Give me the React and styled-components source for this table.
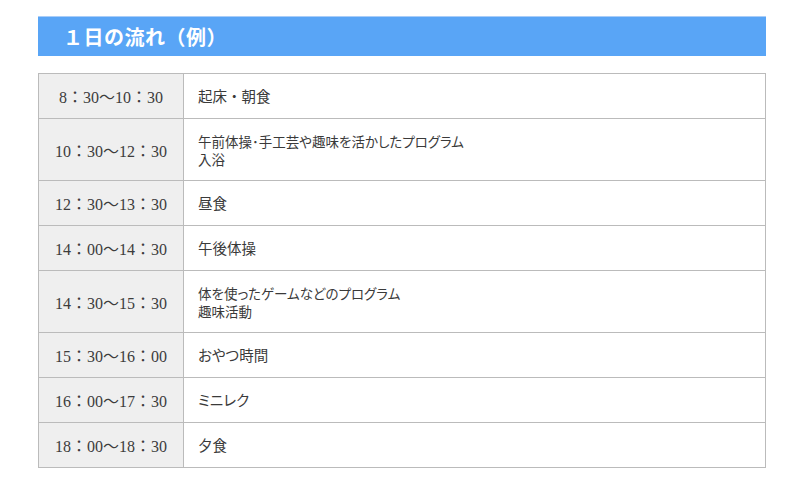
import styled, { createGlobalStyle } from 'styled-components'

const GlobalStyle = createGlobalStyle`
  body {
    margin: 0;
    background: #fff;
    font-family: "Noto Sans CJK JP", "Noto Sans", sans-serif;
  }
`

const Page = styled.div`
  padding: 16px 34px 0 38px;
`

const Heading = styled.h2`
  margin: 0;
  height: 40px;
  display: flex;
  align-items: center;
  padding-left: 25px;
  background: #59a5f6;
  border-top: 1px solid #a9cdf8;
  box-sizing: border-box;
  color: #fff;
  font-size: 20px;
  font-weight: 700;
  letter-spacing: 0.5px;
`

const Table = styled.table`
  margin-top: 17px;
  width: 100%;
  border-collapse: collapse;
  border: 1px solid #bbb;
`

const Row = styled.tr`
  height: ${p => (p.$tall ? 62 : 45)}px;
`

const Time = styled.th`
  width: 144px;
  padding: 0;
  background: #efefef;
  border: 1px solid #bbb;
  color: #3c3c3c;
  font-family: "Liberation Serif", "Noto Sans CJK JP", serif;
  font-size: 16px;
  font-weight: 400;
  text-align: center;
`

const Desc = styled.td`
  padding: 0 14px;
  border: 1px solid #bbb;
  color: #3a3a3a;
  font-size: ${p => (p.$small ? 13.5 : 14.5)}px;
  line-height: 18px;
  font-feature-settings: "palt";
`

const Dot = styled.span`
  font-feature-settings: normal;
`

const schedule = [
  { time: '8：30〜10：30', lines: [<>起床<Dot>・</Dot>朝食</>] },
  { time: '10：30〜12：30', lines: ['午前体操･手工芸や趣味を活かしたプログラム', '入浴'] },
  { time: '12：30〜13：30', lines: ['昼食'] },
  { time: '14：00〜14：30', lines: ['午後体操'] },
  { time: '14：30〜15：30', lines: ['体を使ったゲームなどのプログラム', '趣味活動'] },
  { time: '15：30〜16：00', lines: ['おやつ時間'] },
  { time: '16：00〜17：30', lines: ['ミニレク'] },
  { time: '18：00〜18：30', lines: ['夕食'] },
]

const App = () => {
  return (
    <Page>
      <GlobalStyle />
      <Heading>１日の流れ（例）</Heading>
      <Table>
        <tbody>
          {schedule.map(item => {
            const tall = item.lines.length > 1
            return (
              <Row key={item.time} $tall={tall}>
                <Time>{item.time}</Time>
                <Desc $small={tall}>
                  {item.lines.map((line, i) => (
                    <div key={i}>{line}</div>
                  ))}
                </Desc>
              </Row>
            )
          })}
        </tbody>
      </Table>
    </Page>
  )
}

export default App
